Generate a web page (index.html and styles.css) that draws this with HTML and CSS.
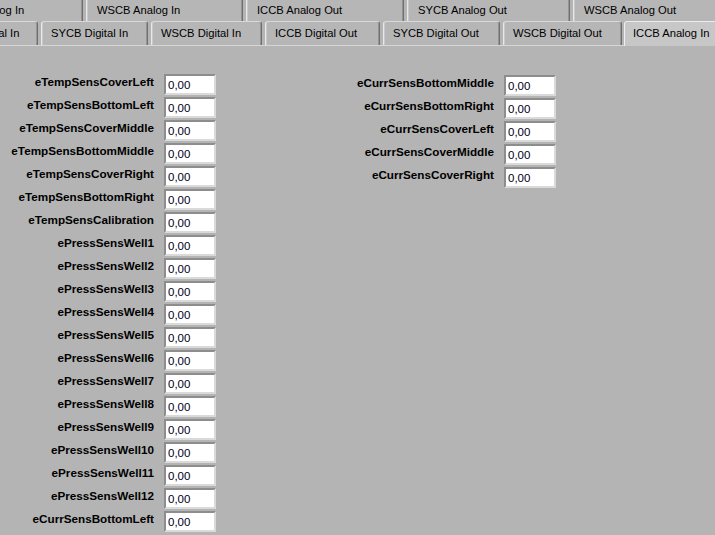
FILE: index.html
```html
<!DOCTYPE html>
<html>
<head>
<meta charset="utf-8">
<link rel="stylesheet" href="styles.css">
</head>
<body>
<div class="tabs">
  <div class="row row1">
    <div class="tab w1a">SYCB Analog In</div>
    <div class="tab w1b">WSCB Analog In</div>
    <div class="tab w1c">ICCB Analog Out</div>
    <div class="tab w1d">SYCB Analog Out</div>
    <div class="tab w1e">WSCB Analog Out</div>
  </div>
  <div class="row row2">
    <div class="tab w2a">ICCB Digital In</div>
    <div class="tab w2b">SYCB Digital In</div>
    <div class="tab w2c">WSCB Digital In</div>
    <div class="tab w2d">ICCB Digital Out</div>
    <div class="tab w2e">SYCB Digital Out</div>
    <div class="tab w2f">WSCB Digital Out</div>
    <div class="tab w2g active">ICCB Analog In</div>
  </div>
</div>
<div class="panel">
  <div class="col">
    <div class="lbl">eTempSensCoverLeft</div><div class="num">0,00</div>
    <div class="lbl">eTempSensBottomLeft</div><div class="num">0,00</div>
    <div class="lbl">eTempSensCoverMiddle</div><div class="num">0,00</div>
    <div class="lbl">eTempSensBottomMiddle</div><div class="num">0,00</div>
    <div class="lbl">eTempSensCoverRight</div><div class="num">0,00</div>
    <div class="lbl">eTempSensBottomRight</div><div class="num">0,00</div>
    <div class="lbl">eTempSensCalibration</div><div class="num">0,00</div>
    <div class="lbl">ePressSensWell1</div><div class="num">0,00</div>
    <div class="lbl">ePressSensWell2</div><div class="num">0,00</div>
    <div class="lbl">ePressSensWell3</div><div class="num">0,00</div>
    <div class="lbl">ePressSensWell4</div><div class="num">0,00</div>
    <div class="lbl">ePressSensWell5</div><div class="num">0,00</div>
    <div class="lbl">ePressSensWell6</div><div class="num">0,00</div>
    <div class="lbl">ePressSensWell7</div><div class="num">0,00</div>
    <div class="lbl">ePressSensWell8</div><div class="num">0,00</div>
    <div class="lbl">ePressSensWell9</div><div class="num">0,00</div>
    <div class="lbl">ePressSensWell10</div><div class="num">0,00</div>
    <div class="lbl">ePressSensWell11</div><div class="num">0,00</div>
    <div class="lbl">ePressSensWell12</div><div class="num">0,00</div>
    <div class="lbl">eCurrSensBottomLeft</div><div class="num">0,00</div>
  </div>
  <div class="col col-right">
    <div class="lbl">eCurrSensBottomMiddle</div><div class="num">0,00</div>
    <div class="lbl">eCurrSensBottomRight</div><div class="num">0,00</div>
    <div class="lbl">eCurrSensCoverLeft</div><div class="num">0,00</div>
    <div class="lbl">eCurrSensCoverMiddle</div><div class="num">0,00</div>
    <div class="lbl">eCurrSensCoverRight</div><div class="num">0,00</div>
  </div>
</div>
</body>
</html>
```

FILE: styles.css
```css
* { box-sizing: border-box; }

html, body {
  margin: 0;
  width: 715px;
  height: 535px;
  overflow: hidden;
  background: #b4b4b4;
  font-family: "Liberation Sans", Arial, sans-serif;
  color: #000;
}

.tabs {
  height: 46px;
  overflow: hidden;
  background: linear-gradient(to top, #d6d6d6 1px, transparent 1px);
}

.row {
  display: flex;
  gap: 3px;
  white-space: nowrap;
}

.row1 {
  margin-top: -2px;
  margin-left: -67px;
  height: 23px;
}

.row2 {
  margin-left: -64px;
  height: 24px;
}

.tab {
  flex: none;
  height: 100%;
  background: #b6b6b6;
  border-top: 1px solid #d8d8d8;
  border-left: 1px solid #e8e8e8;
  border-right: 1px solid #6f6f6f;
  box-shadow: inset -1px 0 #959595, inset 1px 0 #c9c9c9;
  border-radius: 3px 3px 0 0;
  font-size: 11.2px;
  padding-left: 9px;
  line-height: 22px;
  overflow: hidden;
}

.row1 .tab {
  padding-top: 1px;
  line-height: 21px;
  padding-left: 10px;
}

.w1a { width: 150px; }
.w1b { width: 157px; }
.w1c { width: 158px; }
.w1d { width: 163px; }
.w1e { width: 160px; }

.w2a { width: 102px; }
.w2b { width: 107px; }
.w2c { width: 111px; }
.w2d { width: 115px; }
.w2e { width: 117px; }
.w2f { width: 119px; }
.w2g { width: 100px; margin-left: -1px; }

.tab.active {
  height: 25px;
  background: #c7c7c7;
  border-left-color: #f0f0f0;
  border-top-color: #ececec;
  padding-left: 8px;
}

.panel {
  display: flex;
  gap: 124px;
  padding-top: 28px;
}

.col {
  display: grid;
  grid-template-columns: 155px 52px;
  column-gap: 9px;
  row-gap: 2px;
  grid-auto-rows: 21px;
}

.col-right {
  padding-top: 1px;
}

.lbl {
  text-align: right;
  font-weight: bold;
  font-size: 11.7px;
  line-height: 16px;
  padding-right: 1px;
  white-space: nowrap;
}

.num {
  background: #fff;
  border: 2px solid;
  border-color: #8d8d8d #dadada #dadada #8d8d8d;
  font-size: 11.5px;
  line-height: 17px;
  padding: 1px 0 0 2px;
  color: #00001a;
}
```
